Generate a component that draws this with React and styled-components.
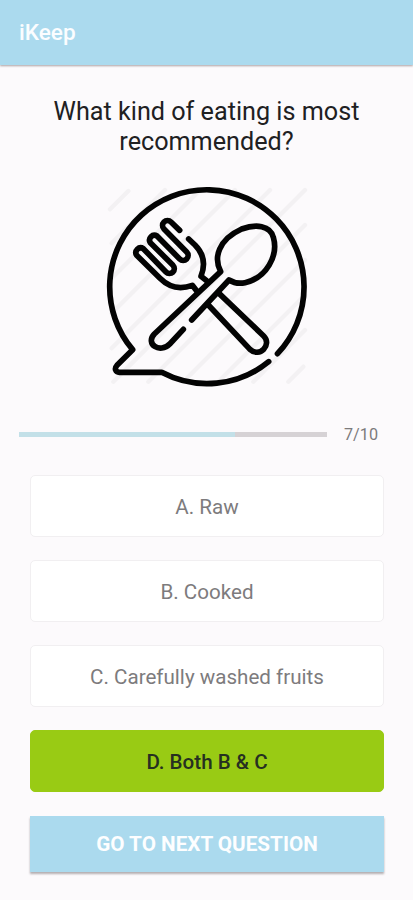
import React from "react";
import styled, { createGlobalStyle } from "styled-components";

const GlobalStyle = createGlobalStyle`
  * { box-sizing: border-box; }
  body {
    margin: 0;
    background: #fcfafc;
    font-family: Roboto, "Liberation Sans", sans-serif;
  }
`;

const Screen = styled.main`
  display: flex;
  flex-direction: column;
  width: 413px;
  height: 900px;
  overflow: hidden;
  background: #fcfafc;
`;

const AppBar = styled.header`
  flex: none;
  display: flex;
  align-items: center;
  height: 65px;
  padding: 0 19px;
  background: #abdaee;
  box-shadow: 0 1px 2px rgba(60, 40, 40, 0.42);
`;

const AppTitle = styled.h1`
  margin: 0;
  color: #fbfdff;
  font-size: 22.6px;
  font-weight: 500;
  line-height: 26px;
`;

const Question = styled.h2`
  flex: none;
  width: 340px;
  margin: 32px auto 0;
  color: #202022;
  font-size: 25.2px;
  font-weight: 400;
  line-height: 29.5px;
  text-align: center;
`;

const Illustration = styled.svg`
  flex: none;
  display: block;
  width: 225px;
  height: 220px;
  margin: 19px 0 0 95px;
`;

const ProgressRow = styled.div`
  flex: none;
  display: flex;
  align-items: center;
  gap: 17px;
  height: 20px;
  margin: 29px 0 0;
  padding-left: 19px;
`;

const Track = styled.div`
  width: 308px;
  height: 5px;
  background: #d6d2d5;
`;

const Fill = styled.div`
  height: 100%;
  background: #c3e0e8;
`;

const Count = styled.span`
  padding-top: 2px;
  color: #7c7a7c;
  font-size: 16.2px;
  line-height: 20px;
`;

const Answers = styled.div`
  flex: none;
  display: flex;
  flex-direction: column;
  gap: 23px;
  margin: 31px 29px 0 30px;
`;

const Answer = styled.button`
  height: 62px;
  padding: 2px 0 0;
  border: 1px solid ${(p) => (p.$correct ? "#99cb14" : "#f1eff1")};
  border-radius: 5px;
  background: ${(p) => (p.$correct ? "#99cb14" : "#ffffff")};
  color: ${(p) => (p.$correct ? "#263021" : "#7d7b7d")};
  font-family: inherit;
  font-size: 20.6px;
  font-weight: ${(p) => (p.$correct ? 500 : 400)};
`;

const NextButton = styled.button`
  flex: none;
  height: 56px;
  margin: 24px 29px 0 30px;
  padding: 0;
  border: 0;
  background: #abdaee;
  box-shadow: 0 2px 2px rgba(50, 40, 45, 0.36);
  color: #fdfeff;
  font-family: inherit;
  font-size: 20.7px;
  font-weight: 700;
  text-transform: uppercase;
`;

const answers = ["A. Raw", "B. Cooked", "C. Carefully washed fruits", "D. Both B & C"];
const correct = 3;
const step = 7;
const total = 10;

function MealIcon() {
  return (
    <Illustration viewBox="0 0 675 660" fill="none" strokeLinejoin="round" strokeLinecap="round">
      <path
        stroke="#f3f1f3"
        strokeWidth="13"
        d="M45 103L100 48M50 205L210 45M50 310L315 45M50 415L420 45M50 520L525 45M55 620L630 45M160 620L630 150M265 620L630 255M370 620L630 360M475 620L630 465M580 620L625 575"
      />
      <g stroke="#030303" strokeWidth="17">
        <path d="M547.5 536A291.5 291.5 0 1 0 113 524L66 571C57 581 62 592 73 592H200A291.5 291.5 0 0 0 521 560" />
        <path d="M254 166L228 141A14.5 14.5 0 0 0 207 162L275 231A14.5 14.5 0 0 1 254 252L186 183A14.5 14.5 0 0 0 166 203L234 271A14.5 14.5 0 0 1 213 291L145 221A14.5 14.5 0 0 0 125 241L195 310C222 337 254 345 292 331L307 350" />
        <path d="M281 192L300 210C326 236 332 268 318 304L335 317" />
        <path d="M290 435L402 315C415 323 431 327 450 323C514 309 551 242 535 187C526 150 482 147 440 162C370 194 355 248 377 290L178 477C150 506 194 538 225 506L265 463" />
        <path d="M372 355L506 483C532 508 494 550 465 523L340 390" />
      </g>
    </Illustration>
  );
}

export default function App() {
  return (
    <>
      <GlobalStyle />
      <Screen>
        <AppBar>
          <AppTitle>iKeep</AppTitle>
        </AppBar>
        <Question>What kind of eating is most recommended?</Question>
        <MealIcon />
        <ProgressRow>
          <Track>
            <Fill style={{ width: `${(step / total) * 100}%` }} />
          </Track>
          <Count>
            {step}/{total}
          </Count>
        </ProgressRow>
        <Answers>
          {answers.map((text, i) => (
            <Answer key={text} $correct={i === correct}>
              {text}
            </Answer>
          ))}
        </Answers>
        <NextButton>Go to next question</NextButton>
      </Screen>
    </>
  );
}
